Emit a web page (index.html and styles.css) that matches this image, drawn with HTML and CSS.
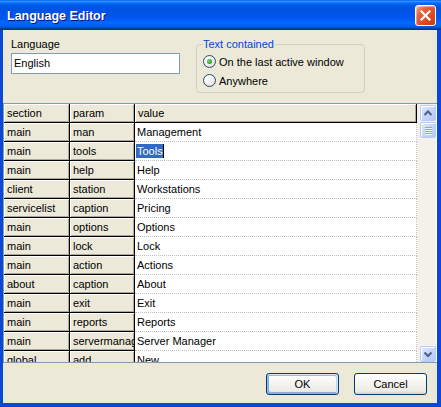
FILE: index.html
```html
<!DOCTYPE html>
<html lang="en">
<head>
<meta charset="UTF-8">
<title>Language Editor</title>
<link rel="stylesheet" href="styles.css">
</head>
<body>

<div class="window">
  <div class="titlebar">
    <span class="title">Language Editor</span>
    <button class="close-btn" aria-label="Close">
      <svg width="19" height="19" viewBox="0 0 19 19">
        <path d="M5.5 5.5 L13.5 13.5 M13.5 5.5 L5.5 13.5" stroke="#fff" stroke-width="2.2" stroke-linecap="square" fill="none"/>
      </svg>
    </button>
  </div>

  <div class="frame">
    <!-- top options -->
    <div class="options">
      <div class="lang-field">
        <label class="field-label">Language</label>
        <div class="textbox">English</div>
      </div>

      <fieldset class="group">
        <legend>Text contained</legend>
        <div class="radio-row">
          <span class="radio checked"></span>
          <span>On the last active window</span>
        </div>
        <div class="radio-row">
          <span class="radio"></span>
          <span>Anywhere</span>
        </div>
      </fieldset>
    </div>

    <!-- grid -->
    <div class="grid">
      <div class="grid-view">
        <table class="strings">
          <colgroup>
            <col class="col-section">
            <col class="col-param">
            <col class="col-value">
          </colgroup>
          <tr class="head">
            <td class="fixed">section</td>
            <td class="fixed">param</td>
            <td class="fixed">value</td>
          </tr>
          <tr><td class="fixed">main</td><td class="fixed">man</td><td>Management</td></tr>
          <tr><td class="fixed">main</td><td class="fixed">tools</td><td><span class="selected">Tools</span></td></tr>
          <tr><td class="fixed">main</td><td class="fixed">help</td><td>Help</td></tr>
          <tr><td class="fixed">client</td><td class="fixed">station</td><td>Workstations</td></tr>
          <tr><td class="fixed">servicelist</td><td class="fixed">caption</td><td>Pricing</td></tr>
          <tr><td class="fixed">main</td><td class="fixed">options</td><td>Options</td></tr>
          <tr><td class="fixed">main</td><td class="fixed">lock</td><td>Lock</td></tr>
          <tr><td class="fixed">main</td><td class="fixed">action</td><td>Actions</td></tr>
          <tr><td class="fixed">about</td><td class="fixed">caption</td><td>About</td></tr>
          <tr><td class="fixed">main</td><td class="fixed">exit</td><td>Exit</td></tr>
          <tr><td class="fixed">main</td><td class="fixed">reports</td><td>Reports</td></tr>
          <tr><td class="fixed">main</td><td class="fixed">servermanager</td><td>Server Manager</td></tr>
          <tr><td class="fixed">global</td><td class="fixed">add</td><td>New</td></tr>
        </table>
      </div>

      <div class="scrollbar">
        <div class="sb-btn">
          <svg width="14" height="14" viewBox="0 0 14 14"><path d="M3.5 9 L7 5.5 L10.5 9" stroke="#4d6185" stroke-width="2" fill="none"/></svg>
        </div>
        <div class="sb-thumb">
          <span></span><span></span><span></span><span></span>
        </div>
        <div class="sb-track"></div>
        <div class="sb-btn">
          <svg width="14" height="14" viewBox="0 0 14 14"><path d="M3.5 5.5 L7 9 L10.5 5.5" stroke="#4d6185" stroke-width="2" fill="none"/></svg>
        </div>
      </div>
    </div>

    <!-- buttons -->
    <div class="buttons">
      <button class="xp-btn default">OK</button>
      <button class="xp-btn">Cancel</button>
    </div>
  </div>
</div>

</body>
</html>
```

FILE: styles.css
```css
body {
  margin: 0;
  font-family: "Liberation Sans", Arial, sans-serif;
  font-size: 11px;
  color: #000;
  background: #ece9d8;
}

.window {
  width: 441px;
  height: 407px;
  display: flex;
  flex-direction: column;
}

/* title bar */
.titlebar {
  height: 30px;
  flex: none;
  display: flex;
  align-items: center;
  justify-content: space-between;
  padding: 0 5px 0 7px;
  background: linear-gradient(180deg, #0058ee 0%, #3593ff 4%, #288eff 6%, #127dff 8%, #036ffc 10%, #0262ee 14%, #0057e5 20%, #0054e3 24%, #0055eb 56%, #005bf5 66%, #026afe 76%, #0062ef 86%, #0052d6 92%, #0040ab 94%, #003092 100%);
}

.title {
  color: #fff;
  font-weight: bold;
  font-size: 12.5px;
  padding-top: 1px;
  text-shadow: 1px 1px 0 #0f1089;
}

.close-btn {
  width: 21px;
  height: 21px;
  padding: 0;
  border: 1px solid #fff;
  border-radius: 3px;
  display: flex;
  align-items: center;
  justify-content: center;
  background: linear-gradient(135deg, #f4a48a 0%, #e5623f 30%, #dc4b24 65%, #c8380f 100%);
  box-shadow: inset 1px 1px 1px rgba(255,255,255,0.4);
}

/* window body */
.frame {
  flex: 1;
  display: flex;
  flex-direction: column;
  border-left: 3px solid #0a48d8;
  border-right: 4px solid #0a48d8;
  border-bottom: 4px solid #0a48d8;
  background: #ece9d8;
  padding-top: 8px;
}

.options {
  display: flex;
  align-items: flex-start;
  gap: 16px;
  padding-left: 8px;
  height: 56px;
}

.field-label {
  display: block;
  line-height: 13px;
}

.textbox {
  width: 169px;
  height: 21px;
  box-sizing: border-box;
  margin-top: 2px;
  border: 1px solid #7f9db9;
  background: #fff;
  padding-left: 2px;
  line-height: 19px;
}

.group {
  margin: 0;
  width: 169px;
  box-sizing: border-box;
  border: 1px solid #d0d0bf;
  border-radius: 4px;
  padding: 1px 6px 2px 6px;
}

.group legend {
  color: #0046d5;
  padding: 0 1px 0 0;
  line-height: 13px;
}

.radio-row {
  height: 19px;
  display: flex;
  align-items: center;
  gap: 3px;
}

.radio {
  width: 13px;
  height: 13px;
  box-sizing: border-box;
  border: 1px solid #1c5180;
  border-radius: 50%;
  background: radial-gradient(circle at 35% 35%, #fff 0%, #f4f3ee 40%, #d8d4c4 100%);
  display: flex;
  align-items: center;
  justify-content: center;
}

.radio.checked::after {
  content: "";
  width: 5px;
  height: 5px;
  border-radius: 50%;
  background: radial-gradient(circle at 40% 40%, #7fe07f 0%, #2aa52a 55%, #1a7d1a 100%);
}

/* grid */
.grid {
  margin-top: 9px;
  height: 260px;
  box-sizing: border-box;
  border: 1px solid #7f9db9;
  border-right: none;
  display: flex;
  background: #fff;
}

.grid-view {
  width: 413px;
  overflow: hidden;
}

.strings {
  border-collapse: separate;
  border-spacing: 0;
  table-layout: fixed;
  width: 413px;
}

.col-section { width: 66px; }
.col-param { width: 65px; }
.col-value { width: 282px; }

.strings td {
  height: 18px;
  padding: 0 0 0 2px;
  line-height: 18px;
  white-space: nowrap;
  overflow: hidden;
  text-overflow: clip;
  border-bottom: 1px dotted #c0c0c0;
  border-right: 1px dotted #c0c0c0;
}

.strings td.fixed {
  background: #ece9d8;
  padding-left: 3px;
  border-bottom: 1px solid #000;
  border-right: 1px solid #000;
  box-shadow: inset 1px 1px 0 #fff, inset -1px -1px 0 #aca899;
}

.selected {
  background: #316ac5;
  color: #fff;
  margin-left: -1px;
  padding: 1px 0 1px 1px;
  border-right: 1px solid #000;
}

/* scrollbar */
.scrollbar {
  width: 19px;
  box-sizing: border-box;
  padding: 0 0 0 3px;
  display: flex;
  flex-direction: column;
  background: #f3f1ea;
}

.sb-btn,
.sb-thumb {
  width: 16px;
  height: 16px;
  box-sizing: border-box;
  border: 1px solid #b8cbf5;
  border-radius: 2px;
  background: linear-gradient(135deg, #e2ebfe 0%, #c6d6fb 50%, #b4c8f6 100%);
  box-shadow: inset 1px 1px 0 #fff;
  display: flex;
  align-items: center;
  justify-content: center;
}

.sb-btn:first-child {
  margin-top: 1px;
}

.sb-thumb {
  margin-top: 1px;
  flex-direction: column;
  gap: 1px;
}

.sb-thumb span {
  width: 7px;
  height: 1px;
  background: #8ca6e4;
  box-shadow: 0 1px 0 #eef3fe;
}

.sb-track {
  flex: 1;
}

/* dialog buttons */
.buttons {
  display: flex;
  justify-content: flex-end;
  gap: 15px;
  padding-right: 10px;
  margin-top: 10px;
}

.xp-btn {
  width: 73px;
  height: 22px;
  font-family: "Liberation Sans", Arial, sans-serif;
  font-size: 11px;
  color: #000;
  border: 1px solid #003c74;
  border-radius: 3px;
  background: linear-gradient(180deg, #fff 0%, #f4f3ee 50%, #ecebe6 86%, #d6d0c5 100%);
  padding: 0;
}

.xp-btn.default {
  box-shadow: inset -1px 1px #cee7ff, inset 1px 2px #98b8ea, inset -2px 2px #bcd4f6, inset 1px -1px #89ade4, inset 2px -2px #89ade4;
}
```
